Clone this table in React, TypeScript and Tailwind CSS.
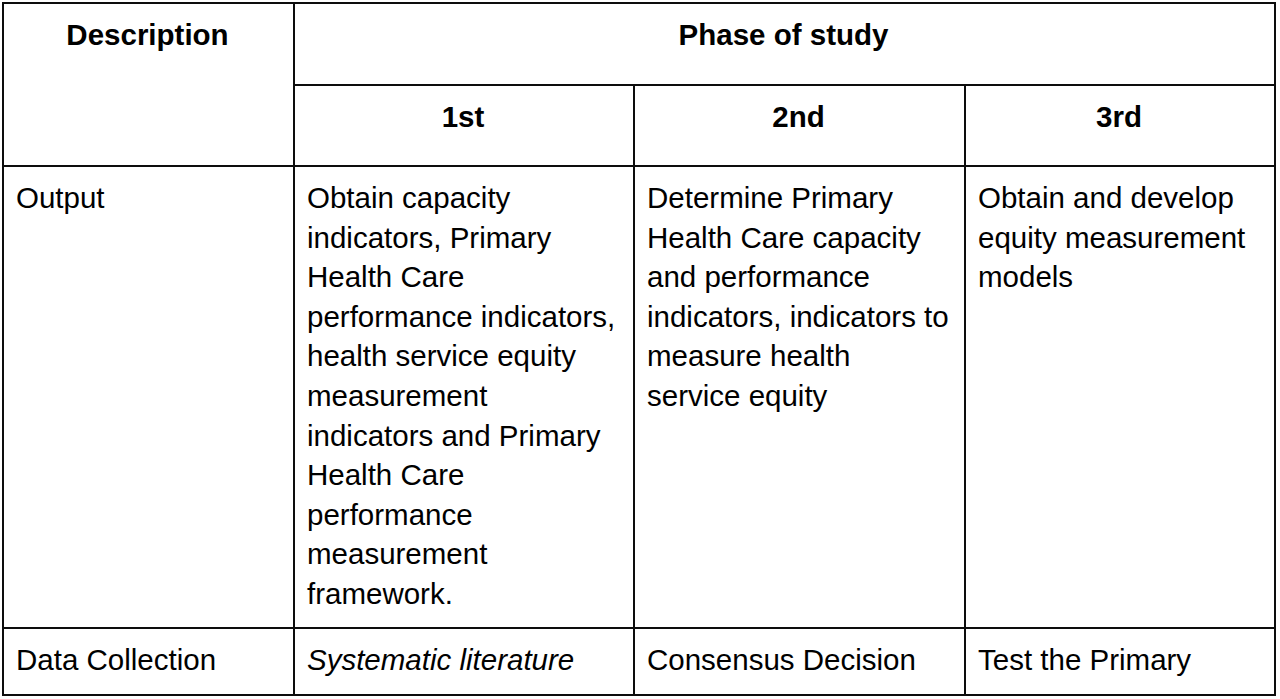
import React from 'react';

const font = { fontFamily: '"Liberation Sans", Arial, sans-serif' };

const cell = 'border-r-2 border-b-2 border-[#0d0d0d] pl-3 pr-[14px] text-[29.5px] leading-[39.6px] text-black overflow-hidden';

const outputs = [
  'Output',
  'Obtain capacity indicators, Primary Health Care performance indicators, health service equity measurement indicators and Primary Health Care performance measurement framework.',
  'Determine Primary Health Care capacity and performance indicators, indicators to measure health service equity',
  'Obtain and develop equity measurement models',
];

export default function App() {
  return (
    <div className="w-[1280px] h-[699px] bg-white overflow-hidden" style={font}>
      <div className="ml-[2px] mt-[2px] grid w-fit grid-cols-[291px_340px_331px_310px] grid-rows-[82px_81px_462px_67px] border-l-2 border-t-2 border-[#0d0d0d]">
        {/* Header */}
        <div className={`${cell} row-span-2 pt-[11px] text-center font-bold`}>Description</div>
        <div className={`${cell} col-span-3 pt-[11px] text-center font-bold`}>Phase of study</div>
        <div className={`${cell} pt-[11px] text-center font-bold`}>1st</div>
        <div className={`${cell} pt-[11px] text-center font-bold`}>2nd</div>
        <div className={`${cell} pt-[11px] text-center font-bold`}>3rd</div>

        {/* Output row */}
        {outputs.map((text, i) => (
          <div key={i} className={`${cell} pt-[11px]`}>
            {text}
          </div>
        ))}

        {/* Data collection row (cut off at the bottom) */}
        <div className={`${cell} pt-[11px] whitespace-nowrap`}>Data Collection</div>
        <div className={`${cell} pt-[11px] whitespace-nowrap italic`}>Systematic literature</div>
        <div className={`${cell} pt-[11px] whitespace-nowrap`}>Consensus Decision</div>
        <div className={`${cell} pt-[11px] whitespace-nowrap`}>Test the Primary</div>
      </div>
    </div>
  );
}
